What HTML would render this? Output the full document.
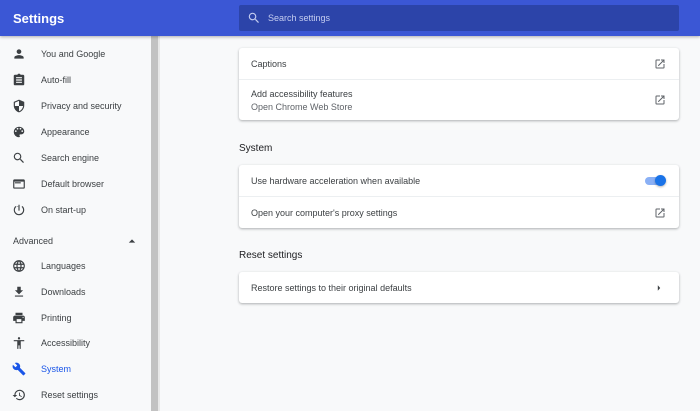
<!DOCTYPE html>
<html><head><style>
*{margin:0;padding:0;box-sizing:border-box}
body{width:700px;height:411px;overflow:hidden;background:#f8f9fa;font-family:"Liberation Sans",sans-serif;position:relative;color:#202124}
.hdr{position:absolute;left:0;top:0;width:700px;height:36px;background:#3b57d5;box-shadow:0 1px 3px rgba(0,0,0,.3);z-index:2}
.hdr .t{position:absolute;left:13px;top:11px;color:#fff;font-size:13px;font-weight:bold}
.sb{position:absolute;left:239px;top:5px;width:440px;height:26px;background:#2c44a9;border-radius:2px}
.sb span{position:absolute;left:29px;top:8px;color:#c5cdf0;font-size:9px}
.side{position:absolute;left:0;top:36px;width:151px;height:375px}
.it{position:absolute;left:0;height:20px;width:150px;font-size:9px;color:#3c4043}
.it svg{position:absolute;left:12px;top:3px;width:14px;height:14px;fill:#3c4043}
.it span{position:absolute;left:41px;top:5px}
.scroll{position:absolute;left:151px;top:36px;width:7px;height:375px;background:#c2c2c2}
.scroll2{position:absolute;left:158px;top:36px;width:2px;height:375px;background:#e8e8e8}
.card{position:absolute;left:239px;width:440px;background:#fff;border-radius:3px;box-shadow:0 1px 2px rgba(60,64,67,.3),0 1px 3px rgba(60,64,67,.12)}
.row{position:relative;border-top:1px solid #eceff1;font-size:9px;color:#3c4043}
.row:first-child{border-top:none}
.row .l{position:absolute;left:12px}
.ext{position:absolute;right:13px;width:12px;height:12px}
h3{position:absolute;left:239px;font-size:10px;font-weight:normal;color:#202124}
</style></head><body>
<div class="hdr"><div class="t">Settings</div>
<div class="sb"><svg style="position:absolute;left:8px;top:6px" width="14" height="14" viewBox="0 0 24 24"><path fill="#c5cdf0" d="M15.5 14h-.79l-.28-.27A6.47 6.47 0 0016 9.5 6.5 6.5 0 109.5 16c1.61 0 3.09-.59 4.23-1.57l.27.28v.79l5 4.99L20.49 19l-4.99-5zm-6 0C7.01 14 5 11.99 5 9.5S7.01 5 9.5 5 14 7.01 14 9.5 11.99 14 9.5 14z"/></svg><span>Search settings</span></div></div>
<div class="side">
<div class="it" style="top:8px"><svg viewBox="0 0 24 24"><path d="M12 12c2.2 0 4-1.8 4-4s-1.8-4-4-4-4 1.8-4 4 1.8 4 4 4zm0 2c-2.7 0-8 1.3-8 4v2h16v-2c0-2.7-5.3-4-8-4z"/></svg><span>You and Google</span></div>
<div class="it" style="top:34px"><svg viewBox="0 0 24 24"><path d="M19 3h-4.2C14.4 1.8 13.3 1 12 1s-2.4.8-2.8 2H5c-1.1 0-2 .9-2 2v14c0 1.1.9 2 2 2h14c1.1 0 2-.9 2-2V5c0-1.1-.9-2-2-2zm-2 14H7v-2h10v2zm0-4H7v-2h10v2zm0-4H7V7h10v2z"/></svg><span>Auto-fill</span></div>
<div class="it" style="top:60px"><svg viewBox="0 0 24 24"><path d="M12 1L3 5v6c0 5.5 3.8 10.7 9 12 5.2-1.3 9-6.5 9-12V5l-9-4zm0 11h7c-.5 4.1-3.3 7.8-7 8.9V12H5V6.3l7-3.1V12z"/></svg><span>Privacy and security</span></div>
<div class="it" style="top:86px"><svg viewBox="0 0 24 24"><path d="M12 3a9 9 0 000 18c.8 0 1.5-.7 1.5-1.5 0-.4-.1-.7-.4-1-.2-.3-.4-.6-.4-1 0-.8.7-1.5 1.5-1.5H16c2.8 0 5-2.2 5-5 0-4.4-4-8-9-8zm-5.5 9a1.5 1.5 0 110-3 1.5 1.5 0 010 3zm3-4a1.5 1.5 0 110-3 1.5 1.5 0 010 3zm5 0a1.5 1.5 0 110-3 1.5 1.5 0 010 3zm3 4a1.5 1.5 0 110-3 1.5 1.5 0 010 3z"/></svg><span>Appearance</span></div>
<div class="it" style="top:112px"><svg viewBox="0 0 24 24"><path d="M15.5 14h-.79l-.28-.27A6.47 6.47 0 0016 9.5 6.5 6.5 0 109.5 16c1.61 0 3.09-.59 4.23-1.57l.27.28v.79l5 4.99L20.49 19l-4.99-5zm-6 0C7.01 14 5 11.99 5 9.5S7.01 5 9.5 5 14 7.01 14 9.5 11.990 14 9.5 14z"/></svg><span>Search engine</span></div>
<div class="it" style="top:138px"><svg viewBox="0 0 24 24"><path d="M20 4H4c-1.1 0-2 .9-2 2v12c0 1.1.9 2 2 2h16c1.1 0 2-.9 2-2V6c0-1.1-.9-2-2-2zm0 14H4V8h16v10zm-5-9H5v2h10V9z"/></svg><span>Default browser</span></div>
<div class="it" style="top:164px"><svg viewBox="0 0 24 24"><path d="M13 3h-2v10h2V3zm4.8 2.2l-1.4 1.4A7 7 0 1112 5v0a7 7 0 01-4.4 1.6L6.2 5.2A9 9 0 1017.8 5.2z"/></svg><span>On start-up</span></div>
<div class="it" style="top:195px"><span style="left:13px">Advanced</span><svg style="left:128px;top:6px;width:8px;height:8px" viewBox="0 0 10 10"><path d="M1 7l4-4 4 4z"/></svg></div>
<div class="it" style="top:220px"><svg viewBox="0 0 24 24"><path d="M12 2a10 10 0 100 20 10 10 0 000-20zm6.9 6h-2.9c-.3-1.3-.8-2.4-1.4-3.6A8 8 0 0118.9 8zM12 4c.8 1.2 1.5 2.5 1.9 4h-3.8c.4-1.4 1.1-2.8 1.9-4zM4.3 14a8 8 0 010-4h3.4a16 16 0 000 4H4.3zm.8 2h3c.3 1.3.8 2.5 1.4 3.6A8 8 0 015.1 16zm3-8h-3a8 8 0 014.3-3.6C8.8 5.6 8.4 6.7 8.1 8zM12 20c-.8-1.2-1.5-2.5-1.9-4h3.8c-.4 1.4-1.1 2.8-1.9 4zm2.3-6H9.7a15 15 0 010-4h4.6a15 15 0 010 4zm.3 5.6c.6-1.1 1.1-2.3 1.4-3.6h3a8 8 0 01-4.4 3.6zm1.8-5.6a16 16 0 000-4h3.4a8 8 0 010 4h-3.4z"/></svg><span>Languages</span></div>
<div class="it" style="top:246px"><svg viewBox="0 0 24 24"><path d="M19 9h-4V3H9v6H5l7 7 7-7zM5 18v2h14v-2H5z"/></svg><span>Downloads</span></div>
<div class="it" style="top:272px"><svg viewBox="0 0 24 24"><path d="M19 8H5c-1.7 0-3 1.3-3 3v6h4v4h12v-4h4v-6c0-1.7-1.3-3-3-3zm-3 11H8v-5h8v5zm3-7c-.6 0-1-.4-1-1s.4-1 1-1 1 .4 1 1-.4 1-1 1zm-1-9H6v4h12V3z"/></svg><span>Printing</span></div>
<div class="it" style="top:297px"><svg viewBox="0 0 24 24"><path d="M12 2a2 2 0 110 4 2 2 0 010-4zm9 7h-6v13h-2v-6h-2v6H9V9H3V7h18v2z"/></svg><span>Accessibility</span></div>
<div class="it" style="top:323px;color:#1a56e8"><svg style="fill:#1a56e8" viewBox="0 0 24 24"><path d="M22.7 19l-9.1-9.1c.9-2.3.4-5-1.5-6.9-2-2-5-2.4-7.4-1.3L9 6 6 9 1.6 4.7C.4 7.1.9 10.1 2.9 12.1c1.9 1.9 4.6 2.4 6.9 1.5l9.1 9.1c.4.4 1 .4 1.4 0l2.3-2.3c.5-.4.5-1.1.1-1.4z"/></svg><span>System</span></div>
<div class="it" style="top:349px"><svg viewBox="0 0 24 24"><path d="M13 3a9 9 0 00-9 9H1l3.9 3.9L9 12H6a7 7 0 112.1 4.9l-1.4 1.4A9 9 0 1013 3zm-1 5v5l4.3 2.5.7-1.2-3.5-2.1V8H12z"/></svg><span>Reset settings</span></div>
</div>
<div class="scroll"></div><div class="scroll2"></div>
<svg width="0" height="0" style="position:absolute"><defs><symbol id="ex" viewBox="0 0 24 24"><path fill="#5f6368" d="M19 19H5V5h7V3H5a2 2 0 00-2 2v14a2 2 0 002 2h14c1.1 0 2-.9 2-2v-7h-2v7zM14 3v2h3.6l-9.8 9.8 1.4 1.4L19 6.4V10h2V3h-7z"/></symbol></defs></svg>
<div class="card" style="top:48px;height:72px">
<div class="row" style="height:31px"><span class="l" style="top:11px">Captions</span><svg class="ext" style="top:10px"><use href="#ex"/></svg></div>
<div class="row" style="height:41px"><span class="l" style="top:9px">Add accessibility features</span><span class="l" style="top:22px;color:#5f6368">Open Chrome Web Store</span><svg class="ext" style="top:14px"><use href="#ex"/></svg></div>
</div>
<h3 style="top:143px">System</h3>
<div class="card" style="top:165px;height:63px">
<div class="row" style="height:31px"><span class="l" style="top:11px">Use hardware acceleration when available</span>
<div style="position:absolute;right:14px;top:12px;width:20px;height:8px;border-radius:4px;background:#8ab0f5"></div>
<div style="position:absolute;right:13px;top:10px;width:11px;height:11px;border-radius:50%;background:#1a73e8;box-shadow:0 1px 2px rgba(0,0,0,.3)"></div></div>
<div class="row" style="height:32px"><span class="l" style="top:11px">Open your computer's proxy settings</span><svg class="ext" style="top:10px"><use href="#ex"/></svg></div>
</div>
<h3 style="top:250px">Reset settings</h3>
<div class="card" style="top:272px;height:31px">
<div class="row" style="height:31px"><span class="l" style="top:11px">Restore settings to their original defaults</span><svg style="position:absolute;right:18px;top:13px" width="4" height="6" viewBox="0 0 5 7"><path d="M1 0l3 3.5L1 7z" fill="#3c4043"/></svg></div>
</div>
</body></html>
